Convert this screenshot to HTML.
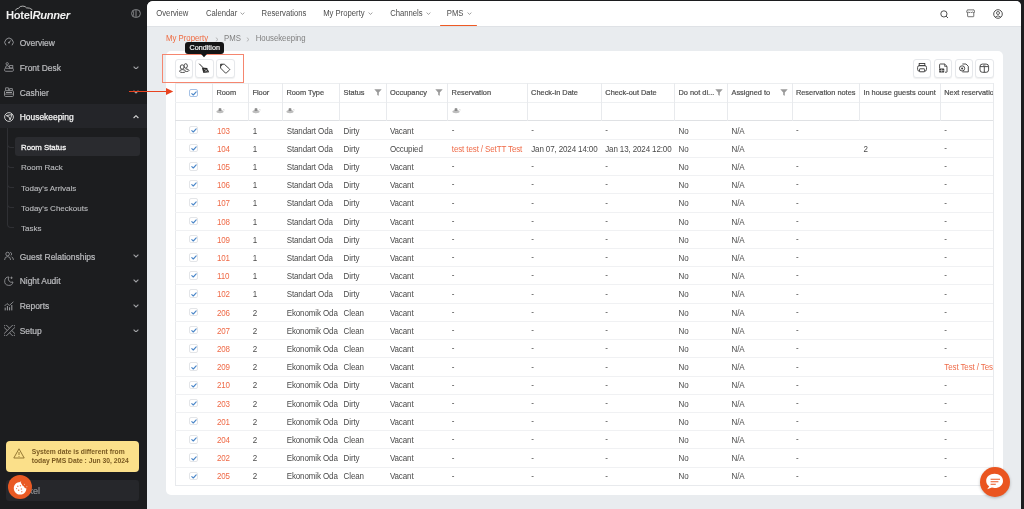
<!DOCTYPE html>
<html><head><meta charset="utf-8">
<style>
*{box-sizing:border-box;margin:0;padding:0}
html,body{width:1024px;height:509px;overflow:hidden;background:#1c1d1f;font-family:"Liberation Sans",sans-serif}
.abs{position:absolute}
.sb-item{position:absolute;left:19.7px;font-size:8.45px;color:#b9babd;line-height:10px;white-space:nowrap;-webkit-text-stroke:0.22px #b9babd}
.sb-ico{position:absolute;left:4px;width:10px;height:10px}
.chev{position:absolute;left:132.6px;width:6px;height:3.8px}
.sub{position:absolute;left:21px;font-size:8px;color:#babbbe;line-height:10px;white-space:nowrap;-webkit-text-stroke:0.12px #babbbe}
#main{position:absolute;left:147px;top:1px;width:874px;height:508px;background:#e9ecef;border-top-left-radius:6px;border-top-right-radius:5px;overflow:hidden}
#nav{position:absolute;left:0;top:0;width:874px;height:26px;background:#fff;border-bottom:1px solid #dfe2e6}
.nv{position:absolute;transform:scaleY(1.15);transform-origin:0 78%;top:7.8px;font-size:7.7px;color:#4d4d4d;line-height:10px;white-space:nowrap}
.bc{position:absolute;transform:scaleY(1.1);transform-origin:0 78%;top:32.8px;font-size:7.8px;color:#808080;line-height:10px;white-space:nowrap}
#card{position:absolute;left:166px;top:50.5px;width:836.5px;height:444px;background:#fff;border-radius:5px}
.tb{position:absolute;width:18.3px;height:18.5px;border:1px solid #e6e8eb;border-radius:3px;background:#fff;box-shadow:0 1px 1px rgba(0,0,0,.06)}
.hd{position:absolute;transform:scaleY(1.04);transform-origin:0 78%;font-size:7.4px;color:#4d4d4d;line-height:9px;white-space:nowrap;-webkit-text-stroke:0.2px #4d4d4d;letter-spacing:0px}
.td{position:absolute;transform:scaleY(1.05);transform-origin:0 78%;font-size:8px;color:#4a4a4a;line-height:10px;white-space:nowrap;letter-spacing:-0.12px}
.org{color:#ef6a47}
.cb{position:absolute;width:9px;height:8.5px;border:1px solid #e3e5e8;border-radius:2px;background:#fff}
.cb svg{position:absolute;left:1px;top:1.2px}
</style></head><body><div id="root" style="position:absolute;left:0;top:0;width:1024px;height:509px;will-change:transform">

<div class="abs" style="left:6px;top:5px;width:64px;height:16px">
<svg width="64" height="16" viewBox="0 0 64 16" style="position:absolute;left:0;top:0">
<path d="M9.3 5.6 Q10.2 3.2 12.6 3.2 Q13.8 1 16.8 1.1 Q19.6 1.2 20.4 2.8 Q23.8 2.6 26.4 4.8" fill="none" stroke="#d8d8d8" stroke-width="0.8"/>
</svg>
<div style="position:absolute;left:0;top:4px;font-size:11.2px;font-weight:bold;color:#f2f2f2;letter-spacing:-0.3px;line-height:12px;white-space:nowrap;transform:scaleY(1.0);transform-origin:0 100%">Hotel<span style="font-style:italic">Runner</span></div>
</div>
<svg class="abs" style="left:131px;top:9px" width="10" height="9" viewBox="0 0 10 9"><rect x="0.6" y="0.6" width="8.8" height="7.8" rx="3.9" fill="none" stroke="#8a8b8e" stroke-width="1"/><line x1="5" y1="0.8" x2="5" y2="8.2" stroke="#8a8b8e" stroke-width="1"/><line x1="2.6" y1="2.2" x2="2.6" y2="6.8" stroke="#8a8b8e" stroke-width="0.8"/></svg>
<svg class="sb-ico" style="top:37.4px" viewBox="0 0 10 10"><path d="M2 8.3 A4.2 4.2 0 1 1 8 8.3" fill="none" stroke="#9d9ea1" stroke-width="0.9"/><circle cx="5" cy="5.6" r="0.9" fill="#9d9ea1"/><line x1="5" y1="5.6" x2="6.8" y2="3.4" stroke="#9d9ea1" stroke-width="0.9"/></svg>
<div class="sb-item" style="top:38.1px">Overview</div>
<svg class="sb-ico" style="top:62.2px" viewBox="0 0 10 10"><circle cx="3.2" cy="1.8" r="1.2" fill="none" stroke="#9d9ea1" stroke-width="0.8"/><path d="M1.5 6 Q1.5 3.6 3.2 3.6 Q4.6 3.6 4.9 5" fill="none" stroke="#9d9ea1" stroke-width="0.8"/><rect x="5.6" y="3.6" width="3.2" height="2.4" fill="none" stroke="#9d9ea1" stroke-width="0.8"/><rect x="0.6" y="6.3" width="8.8" height="3" rx="1" fill="none" stroke="#9d9ea1" stroke-width="0.8"/></svg>
<div class="sb-item" style="top:62.900000000000006px">Front Desk</div>
<svg class="chev" style="top:65.7px" viewBox="0 0 6 3.8"><path d="M0.6 0.7 L3 3 L5.4 0.7" fill="none" stroke="#a0a1a4" stroke-width="1.1"/></svg>
<svg class="sb-ico" style="top:86.9px" viewBox="0 0 10 10"><path d="M1.6 3.4 V0.8 H4.4 V3.4 M5.6 3.4 V1.6 H8.4 V3.4" fill="none" stroke="#9d9ea1" stroke-width="0.8"/><rect x="0.5" y="3.6" width="9" height="5.9" rx="1.2" fill="none" stroke="#9d9ea1" stroke-width="0.85"/><rect x="2" y="4.9" width="6" height="1.1" fill="#9d9ea1"/><line x1="0.5" y1="7.1" x2="9.5" y2="7.1" stroke="#9d9ea1" stroke-width="0.7"/></svg>
<div class="sb-item" style="top:87.60000000000001px">Cashier</div>
<svg class="chev" style="top:90.4px" viewBox="0 0 6 3.8"><path d="M0.6 0.7 L3 3 L5.4 0.7" fill="none" stroke="#a0a1a4" stroke-width="1.1"/></svg>
<div class="abs" style="left:0;top:104px;width:147px;height:24.2px;background:#242529"></div>
<svg class="sb-ico" style="top:111.6px" viewBox="0 0 10 10"><circle cx="5" cy="5" r="4.4" fill="none" stroke="#e0e0e0" stroke-width="0.9"/><path d="M2.3 3.6 L8 2.6 L6 8" fill="none" stroke="#e0e0e0" stroke-width="0.9"/><path d="M2.3 3.6 L5.3 5.2 L6 8" fill="none" stroke="#e0e0e0" stroke-width="0.9"/></svg>
<div class="sb-item" style="top:112.2px;color:#f4f4f4;-webkit-text-stroke:0.25px #f4f4f4">Housekeeping</div>
<svg class="chev" style="top:115px" viewBox="0 0 6 3.8"><path d="M0.6 3 L3 0.7 L5.4 3" fill="none" stroke="#d8d8d8" stroke-width="1.1"/></svg>
<div class="abs" style="left:7px;top:128px;width:0.8px;height:97px;background:#2f3034"></div>
<div class="abs" style="left:7px;top:143.0px;width:6.5px;height:4.5px;border-left:0.8px solid #2f3034;border-bottom:0.8px solid #2f3034;border-bottom-left-radius:4px"></div>
<div class="abs" style="left:7px;top:163.1px;width:6.5px;height:4.5px;border-left:0.8px solid #2f3034;border-bottom:0.8px solid #2f3034;border-bottom-left-radius:4px"></div>
<div class="abs" style="left:7px;top:183.5px;width:6.5px;height:4.5px;border-left:0.8px solid #2f3034;border-bottom:0.8px solid #2f3034;border-bottom-left-radius:4px"></div>
<div class="abs" style="left:7px;top:203.7px;width:6.5px;height:4.5px;border-left:0.8px solid #2f3034;border-bottom:0.8px solid #2f3034;border-bottom-left-radius:4px"></div>
<div class="abs" style="left:7px;top:223.8px;width:6.5px;height:4.5px;border-left:0.8px solid #2f3034;border-bottom:0.8px solid #2f3034;border-bottom-left-radius:4px"></div>
<div class="abs" style="left:14.5px;top:137.1px;width:125.3px;height:19.3px;background:#2a2b2f;border-radius:3px"></div>
<div class="sub" style="top:143.1px;color:#f2f2f2;font-size:7.8px;-webkit-text-stroke:0.3px #f2f2f2">Room Status</div>
<div class="sub" style="top:163.29999999999998px">Room Rack</div>
<div class="sub" style="top:183.7px">Today's Arrivals</div>
<div class="sub" style="top:203.89999999999998px">Today's Checkouts</div>
<div class="sub" style="top:224.0px">Tasks</div>
<svg class="sb-ico" style="top:251.4px" viewBox="0 0 10 10"><circle cx="3.6" cy="3" r="1.8" fill="none" stroke="#9d9ea1" stroke-width="0.8"/><path d="M0.6 9 Q0.6 5.6 3.6 5.6 Q6.6 5.6 6.6 9" fill="none" stroke="#9d9ea1" stroke-width="0.8"/><path d="M6.2 1.3 A1.8 1.8 0 0 1 6.6 4.7" fill="none" stroke="#9d9ea1" stroke-width="0.8"/><path d="M7.6 5.9 Q9.4 6.4 9.4 9" fill="none" stroke="#9d9ea1" stroke-width="0.8"/></svg>
<div class="sb-item" style="top:251.49999999999997px">Guest Relationships</div>
<svg class="chev" style="top:254.39999999999998px" viewBox="0 0 6 3.8"><path d="M0.6 0.7 L3 3 L5.4 0.7" fill="none" stroke="#a0a1a4" stroke-width="1.1"/></svg>
<svg class="sb-ico" style="top:275.9px" viewBox="0 0 10 10"><path d="M5 1 A4.2 4.2 0 1 0 9 6 A3.3 3.3 0 0 1 5 1Z" fill="none" stroke="#9d9ea1" stroke-width="0.8"/><path d="M7.5 0.6 L7.5 3 M6.3 1.8 L8.7 1.8" stroke="#9d9ea1" stroke-width="0.7"/></svg>
<div class="sb-item" style="top:276.0px">Night Audit</div>
<svg class="chev" style="top:278.9px" viewBox="0 0 6 3.8"><path d="M0.6 0.7 L3 3 L5.4 0.7" fill="none" stroke="#a0a1a4" stroke-width="1.1"/></svg>
<svg class="sb-ico" style="top:301px" viewBox="0 0 10 10"><path d="M0.6 5 L3 2.6 L5.4 4.4 L9.4 0.8" fill="none" stroke="#9d9ea1" stroke-width="0.8"/><path d="M1.2 9.4 V6.6 M3.4 9.4 V5 M5.6 9.4 V6.2 M7.8 9.4 V4" stroke="#9d9ea1" stroke-width="1"/></svg>
<div class="sb-item" style="top:301.1px">Reports</div>
<svg class="chev" style="top:304px" viewBox="0 0 6 3.8"><path d="M0.6 0.7 L3 3 L5.4 0.7" fill="none" stroke="#a0a1a4" stroke-width="1.1"/></svg>
<svg class="sb-ico" style="top:325.1px;left:3.6px;width:11px;height:11px" viewBox="0 0 11 11"><rect x="-1.6" y="3.9" width="14.2" height="3.2" rx="1" transform="rotate(45 5.5 5.5)" fill="none" stroke="#9d9ea1" stroke-width="0.8"/><rect x="-1.6" y="3.9" width="14.2" height="3.2" rx="1" transform="rotate(-45 5.5 5.5)" fill="#1c1d20" stroke="#9d9ea1" stroke-width="0.8"/></svg>
<div class="sb-item" style="top:325.70000000000005px">Setup</div>
<svg class="chev" style="top:328.6px" viewBox="0 0 6 3.8"><path d="M0.6 0.7 L3 3 L5.4 0.7" fill="none" stroke="#a0a1a4" stroke-width="1.1"/></svg>
<div class="abs" style="left:6px;top:440.5px;width:133px;height:31px;background:#fbe08a;border-radius:4px"></div>
<svg class="abs" style="left:13px;top:447.5px" width="12" height="11" viewBox="0 0 12 11"><path d="M6 0.8 L11.2 10 L0.8 10 Z" fill="none" stroke="#8a6d2a" stroke-width="0.9" stroke-linejoin="round"/><line x1="6" y1="4" x2="6" y2="7" stroke="#8a6d2a" stroke-width="0.9"/><circle cx="6" cy="8.4" r="0.5" fill="#8a6d2a"/></svg>
<div class="abs" style="left:31.7px;top:447px;font-weight:bold;font-size:6.75px;line-height:9.2px;color:#7a5a22;white-space:nowrap">System date is different from<br>today PMS Date : Jun 30, 2024</div>
<div class="abs" style="left:6px;top:480px;width:133px;height:21.2px;background:#26272b;border-radius:3px"></div>
<div class="abs" style="left:28.4px;top:486.4px;font-size:9px;color:#8f9093;line-height:10px;-webkit-text-stroke:0.2px #8f9093">xel</div>
<div class="abs" style="left:7.9px;top:475.2px;width:24.2px;height:24.2px;border-radius:50%;background:#e95a24"></div>
<svg class="abs" style="left:12.5px;top:480.5px" width="16" height="15" viewBox="0 0 16 15"><path d="M7.2 1 C3.6 1 0.8 3.8 0.8 7.2 C0.8 10.7 3.6 13.6 7.1 13.6 C10.5 13.6 13.3 10.9 13.4 7.4 C12.2 7.4 11.2 6.6 11 5.4 C9.8 5.2 8.8 4.2 8.8 3 C8.2 2.6 7.8 1.8 7.7 1 Z" fill="#fff"/><circle cx="4.8" cy="5.2" r="0.75" fill="#ee7a52"/><circle cx="7.4" cy="4.8" r="0.7" fill="#ee7a52"/><circle cx="5.6" cy="9.2" r="0.75" fill="#ee7a52"/><circle cx="8.4" cy="8" r="0.75" fill="#ee7a52"/><circle cx="8.8" cy="10.8" r="0.7" fill="#ee7a52"/><circle cx="3.6" cy="7.6" r="0.6" fill="#ee7a52"/><circle cx="7.8" cy="0.6" r="0.45" fill="#fff"/><circle cx="11.4" cy="3.2" r="0.45" fill="#fff"/><circle cx="13.9" cy="5.8" r="0.45" fill="#fff"/></svg>

<div id="main">
<div id="nav">
<div class="nv" style="left:9.300000000000011px">Overview</div>
<div class="nv" style="left:59px">Calendar</div>
<svg class="abs" style="left:93.44515625000001px;top:11.2px" width="5" height="3" viewBox="0 0 5 3"><path d="M0.6 0.6 L2.5 2.4 L4.4 0.6" fill="none" stroke="#777" stroke-width="0.7"/></svg>
<div class="nv" style="left:114.60000000000002px">Reservations</div>
<div class="nv" style="left:176.2px">My Property</div>
<svg class="abs" style="left:220.90179687499997px;top:11.2px" width="5" height="3" viewBox="0 0 5 3"><path d="M0.6 0.6 L2.5 2.4 L4.4 0.6" fill="none" stroke="#777" stroke-width="0.7"/></svg>
<div class="nv" style="left:243.2px">Channels</div>
<svg class="abs" style="left:278.931296875px;top:11.2px" width="5" height="3" viewBox="0 0 5 3"><path d="M0.6 0.6 L2.5 2.4 L4.4 0.6" fill="none" stroke="#777" stroke-width="0.7"/></svg>
<div class="nv" style="left:299.8px">PMS</div>
<svg class="abs" style="left:319.686140625px;top:11.2px" width="5" height="3" viewBox="0 0 5 3"><path d="M0.6 0.6 L2.5 2.4 L4.4 0.6" fill="none" stroke="#777" stroke-width="0.7"/></svg>
<div class="abs" style="left:293px;top:23.6px;width:36.6px;height:1.8px;background:#ee5a24;border-radius:1px"></div>
<svg class="abs" style="left:792.5px;top:8.5px" width="9" height="9" viewBox="0 0 9 9"><circle cx="3.9" cy="3.9" r="3.1" fill="none" stroke="#3d3d3d" stroke-width="0.9"/><line x1="6.1" y1="6.1" x2="8" y2="8" stroke="#3d3d3d" stroke-width="0.9"/></svg>
<svg class="abs" style="left:818.9px;top:8.3px" width="9.4" height="8.6" viewBox="0 0 11 10"><path d="M1.6 1 H9.4 L10.2 3.3 Q10.2 4.1 9.3 4.1 Q8.3 4.1 7.9 3.4 Q7.5 4.1 6.5 4.1 Q5.6 4.1 5.2 3.4 Q4.8 4.1 3.9 4.1 Q2.9 4.1 2.5 3.4 Q2.1 4.1 1.3 4.1 Q0.6 4 0.8 3.3 Z" fill="none" stroke="#3d3d3d" stroke-width="0.85" stroke-linejoin="round"/><path d="M1.9 4.2 V8.4 Q1.9 9 2.5 9 H8.5 Q9.1 9 9.1 8.4 V4.2" fill="none" stroke="#3d3d3d" stroke-width="0.85"/></svg>
<svg class="abs" style="left:845.5px;top:7.7px" width="10" height="10" viewBox="0 0 10 10"><circle cx="5" cy="5" r="4.3" fill="none" stroke="#3d3d3d" stroke-width="0.9"/><circle cx="5" cy="4" r="1.5" fill="none" stroke="#3d3d3d" stroke-width="0.8"/><path d="M2.4 8 Q5 5.6 7.6 8" fill="none" stroke="#3d3d3d" stroke-width="0.8"/></svg>

</div>
<div class="bc" style="left:19px;color:#ef6a40">My Property</div>
<div class="bc" style="left:77px">PMS</div>
<div class="bc" style="left:108.69999999999999px">Housekeeping</div>
<svg class="abs" style="left:67.69999999999999px;top:35.6px" width="4" height="5" viewBox="0 0 4 5"><path d="M0.8 0.6 L3 2.5 L0.8 4.4" fill="none" stroke="#a0a0a0" stroke-width="0.7"/></svg>
<svg class="abs" style="left:99.4px;top:35.6px" width="4" height="5" viewBox="0 0 4 5"><path d="M0.8 0.6 L3 2.5 L0.8 4.4" fill="none" stroke="#a0a0a0" stroke-width="0.7"/></svg>
</div>
<div id="card"></div>
<div class="tb" style="left:174.5px;top:59.2px"></div>
<div class="tb" style="left:195.3px;top:59.2px"></div>
<div class="tb" style="left:216.4px;top:59.2px"></div>
<svg class="abs" style="left:174.5px;top:59.2px" width="18" height="18" viewBox="0 0 18 18">
<ellipse cx="10.7" cy="6.9" rx="1.7" ry="2.2" fill="none" stroke="#3a3a3a" stroke-width="0.9"/>
<path d="M10.6 9.8 Q14 10.2 14 11.4 Q14 12.4 11.2 12.6" fill="none" stroke="#3a3a3a" stroke-width="0.9"/>
<ellipse cx="7.15" cy="8" rx="1.9" ry="2.2" fill="#fff" stroke="#3a3a3a" stroke-width="0.9"/>
<path d="M4.6 12.3 Q4.6 10.7 7.4 10.6 Q10.6 10.7 10.6 12.3 Q10.6 13.5 7.6 13.5 Q4.6 13.5 4.6 12.3 Z" fill="#fff" stroke="#3a3a3a" stroke-width="0.9"/>
</svg>
<svg class="abs" style="left:195.3px;top:59.2px" width="18" height="18" viewBox="0 0 18 18">
<path d="M4.2 4.7 L8 8.6" stroke="#2a2a2a" stroke-width="1"/>
<path d="M6.8 8.6 L12.2 9 L14.2 13.2 L8.4 13.9 Z" fill="#2a2a2a"/>
<path d="M9.2 10.2 L12.4 12.4 M12.6 10.4 L9.6 12.8" stroke="#fff" stroke-width="0.5"/>
</svg>
<svg class="abs" style="left:216.4px;top:59.2px" width="18" height="18" viewBox="0 0 18 18">
<path d="M4.6 5.2 L8.3 5.2 L13.6 10.1 Q14 10.5 13.6 10.9 L10.2 14 Q9.8 14.4 9.4 14 L4.6 9.1 Z" fill="none" stroke="#3a3a3a" stroke-width="0.95" stroke-linejoin="round"/>
<path d="M4.6 5.2 L7.2 5.2 L4.6 7.8 Z" fill="#3a3a3a"/>
</svg>

<div class="tb" style="left:913.1px;top:59.3px"></div>
<div class="tb" style="left:933.8px;top:59.3px"></div>
<div class="tb" style="left:954.6px;top:59.3px"></div>
<div class="tb" style="left:975.4px;top:59.3px"></div>
<svg class="abs" style="left:913.1px;top:59.3px" width="18" height="18" viewBox="0 0 18 18">
<rect x="6.2" y="4.5" width="5.6" height="2.2" fill="none" stroke="#3a3a3a" stroke-width="0.9"/>
<rect x="4.6" y="6.6" width="8.9" height="5.6" rx="1.8" fill="none" stroke="#3a3a3a" stroke-width="0.9"/>
<rect x="6.5" y="9.8" width="5.1" height="3" rx="0.4" fill="#fff" stroke="#3a3a3a" stroke-width="0.9"/>
</svg>
<svg class="abs" style="left:933.8px;top:59.3px" width="18" height="18" viewBox="0 0 18 18">
<path d="M5.6 9.6 L5.6 5.6 Q5.6 5 6.2 5 L10.6 5 L13 7.4 L13 12.8 Q13 13.2 12.6 13.2 L11 13.2" fill="none" stroke="#3a3a3a" stroke-width="0.9"/>
<path d="M10.6 5 L10.6 7.4 L13 7.4" fill="none" stroke="#3a3a3a" stroke-width="0.7"/>
<rect x="5.2" y="9.6" width="5" height="4" rx="0.6" fill="#3a3a3a"/>
<path d="M7.7 9.9 V13.3 M5.5 11.6 H9.9" stroke="#fff" stroke-width="0.55"/>
</svg>
<svg class="abs" style="left:954.6px;top:59.3px" width="18" height="18" viewBox="0 0 18 18">
<path d="M7.4 5 L11 5 L13.3 7.3 L13.3 12.9 L7.4 12.9" fill="none" stroke="#3a3a3a" stroke-width="0.9" stroke-linejoin="round"/>
<circle cx="7.1" cy="9.4" r="2.6" fill="#fff" stroke="#3a3a3a" stroke-width="0.9"/>
<circle cx="7.1" cy="9.4" r="1" fill="#3a3a3a"/>
</svg>
<svg class="abs" style="left:975.4px;top:59.3px" width="18" height="18" viewBox="0 0 18 18">
<rect x="5" y="5.1" width="8.6" height="8.2" rx="2.4" fill="none" stroke="#3a3a3a" stroke-width="0.9"/>
<path d="M5 7.6 H13.6 M9.3 7.6 V13.3" stroke="#3a3a3a" stroke-width="0.9"/>
<path d="M8.2 6.6 Q9.3 5.8 10.4 6.6" fill="none" stroke="#3a3a3a" stroke-width="0.6"/>
</svg>

<div class="abs" style="left:175px;top:83.2px;width:818.5px;height:402.6000000000001px;border:1px solid #e8eaed;border-top:1px solid #eceef0"></div>
<div class="abs" style="left:175px;top:101.7px;width:818.5px;height:1px;background:#eef0f2"></div>
<div class="abs" style="left:175px;top:120.1px;width:818.5px;height:1.2px;background:#dfe1e4"></div>
<div class="abs" style="left:212.2px;top:83.2px;width:1px;height:37.39999999999999px;background:#e8eaed"></div>
<div class="abs" style="left:248.2px;top:83.2px;width:1px;height:37.39999999999999px;background:#e8eaed"></div>
<div class="abs" style="left:282.2px;top:83.2px;width:1px;height:37.39999999999999px;background:#e8eaed"></div>
<div class="abs" style="left:339.4px;top:83.2px;width:1px;height:37.39999999999999px;background:#e8eaed"></div>
<div class="abs" style="left:385.8px;top:83.2px;width:1px;height:37.39999999999999px;background:#e8eaed"></div>
<div class="abs" style="left:447.4px;top:83.2px;width:1px;height:37.39999999999999px;background:#e8eaed"></div>
<div class="abs" style="left:526.9px;top:83.2px;width:1px;height:37.39999999999999px;background:#e8eaed"></div>
<div class="abs" style="left:601.1px;top:83.2px;width:1px;height:37.39999999999999px;background:#e8eaed"></div>
<div class="abs" style="left:674.3px;top:83.2px;width:1px;height:37.39999999999999px;background:#e8eaed"></div>
<div class="abs" style="left:727.3px;top:83.2px;width:1px;height:37.39999999999999px;background:#e8eaed"></div>
<div class="abs" style="left:791.7px;top:83.2px;width:1px;height:37.39999999999999px;background:#e8eaed"></div>
<div class="abs" style="left:859.2px;top:83.2px;width:1px;height:37.39999999999999px;background:#e8eaed"></div>
<div class="abs" style="left:940px;top:83.2px;width:1px;height:37.39999999999999px;background:#e8eaed"></div>
<div class="abs" style="left:175px;top:138.81px;width:818.5px;height:1px;background:#f0f1f3"></div>
<div class="abs" style="left:175px;top:157.01999999999998px;width:818.5px;height:1px;background:#f0f1f3"></div>
<div class="abs" style="left:175px;top:175.23px;width:818.5px;height:1px;background:#f0f1f3"></div>
<div class="abs" style="left:175px;top:193.44px;width:818.5px;height:1px;background:#f0f1f3"></div>
<div class="abs" style="left:175px;top:211.65px;width:818.5px;height:1px;background:#f0f1f3"></div>
<div class="abs" style="left:175px;top:229.86px;width:818.5px;height:1px;background:#f0f1f3"></div>
<div class="abs" style="left:175px;top:248.07px;width:818.5px;height:1px;background:#f0f1f3"></div>
<div class="abs" style="left:175px;top:266.28px;width:818.5px;height:1px;background:#f0f1f3"></div>
<div class="abs" style="left:175px;top:284.49px;width:818.5px;height:1px;background:#f0f1f3"></div>
<div class="abs" style="left:175px;top:302.70000000000005px;width:818.5px;height:1px;background:#f0f1f3"></div>
<div class="abs" style="left:175px;top:320.90999999999997px;width:818.5px;height:1px;background:#f0f1f3"></div>
<div class="abs" style="left:175px;top:339.12px;width:818.5px;height:1px;background:#f0f1f3"></div>
<div class="abs" style="left:175px;top:357.33000000000004px;width:818.5px;height:1px;background:#f0f1f3"></div>
<div class="abs" style="left:175px;top:375.53999999999996px;width:818.5px;height:1px;background:#f0f1f3"></div>
<div class="abs" style="left:175px;top:393.75px;width:818.5px;height:1px;background:#f0f1f3"></div>
<div class="abs" style="left:175px;top:411.96000000000004px;width:818.5px;height:1px;background:#f0f1f3"></div>
<div class="abs" style="left:175px;top:430.16999999999996px;width:818.5px;height:1px;background:#f0f1f3"></div>
<div class="abs" style="left:175px;top:448.38px;width:818.5px;height:1px;background:#f0f1f3"></div>
<div class="abs" style="left:175px;top:466.59000000000003px;width:818.5px;height:1px;background:#f0f1f3"></div>
<div class="abs" style="left:189.1px;top:88.9px;width:9.3px;height:8.5px;border:1px solid #a6c2e6;border-radius:2px;background:#fff"><svg style="position:absolute;left:1px;top:1.2px" width="6" height="5" viewBox="0 0 6 5"><path d="M0.8 2.6 L2.3 4 L5.2 0.9" fill="none" stroke="#4a86c8" stroke-width="1.1" stroke-linecap="round" stroke-linejoin="round"/></svg></div>
<div class="hd" style="left:216.39999999999998px;top:87.6px">Room</div>
<svg class="abs" style="left:216.39999999999998px;top:107.2px" width="9" height="6.5" viewBox="0 0 9 6.5"><ellipse cx="4" cy="4.6" rx="3.6" ry="1.7" fill="#bdbdbd"/><path d="M2.5 4 L2.7 1.4 Q4 0.4 5.3 1.4 L5.5 4 Z" fill="#8c8c8c"/><path d="M7.2 2.2 L8.4 3.4 M8.4 2.2 L7.2 3.4" stroke="#d0d0d0" stroke-width="0.6"/></svg>
<div class="hd" style="left:252.39999999999998px;top:87.6px">Floor</div>
<svg class="abs" style="left:252.39999999999998px;top:107.2px" width="9" height="6.5" viewBox="0 0 9 6.5"><ellipse cx="4" cy="4.6" rx="3.6" ry="1.7" fill="#bdbdbd"/><path d="M2.5 4 L2.7 1.4 Q4 0.4 5.3 1.4 L5.5 4 Z" fill="#8c8c8c"/><path d="M7.2 2.2 L8.4 3.4 M8.4 2.2 L7.2 3.4" stroke="#d0d0d0" stroke-width="0.6"/></svg>
<div class="hd" style="left:286.4px;top:87.6px">Room Type</div>
<svg class="abs" style="left:286.4px;top:107.2px" width="9" height="6.5" viewBox="0 0 9 6.5"><ellipse cx="4" cy="4.6" rx="3.6" ry="1.7" fill="#bdbdbd"/><path d="M2.5 4 L2.7 1.4 Q4 0.4 5.3 1.4 L5.5 4 Z" fill="#8c8c8c"/><path d="M7.2 2.2 L8.4 3.4 M8.4 2.2 L7.2 3.4" stroke="#d0d0d0" stroke-width="0.6"/></svg>
<div class="hd" style="left:343.59999999999997px;top:87.6px">Status</div>
<svg class="abs" style="left:373.8px;top:88.8px" width="8" height="7" viewBox="0 0 8 7"><path d="M0.3 0.3 H7.7 L4.8 3.4 V6.8 L3.2 6 V3.4 Z" fill="#9a9a9a"/></svg>
<div class="hd" style="left:390.0px;top:87.6px">Occupancy</div>
<svg class="abs" style="left:435.4px;top:88.8px" width="8" height="7" viewBox="0 0 8 7"><path d="M0.3 0.3 H7.7 L4.8 3.4 V6.8 L3.2 6 V3.4 Z" fill="#9a9a9a"/></svg>
<div class="hd" style="left:451.59999999999997px;top:87.6px">Reservation</div>
<svg class="abs" style="left:451.59999999999997px;top:107.2px" width="9" height="6.5" viewBox="0 0 9 6.5"><ellipse cx="4" cy="4.6" rx="3.6" ry="1.7" fill="#bdbdbd"/><path d="M2.5 4 L2.7 1.4 Q4 0.4 5.3 1.4 L5.5 4 Z" fill="#8c8c8c"/><path d="M7.2 2.2 L8.4 3.4 M8.4 2.2 L7.2 3.4" stroke="#d0d0d0" stroke-width="0.6"/></svg>
<div class="hd" style="left:531.1px;top:87.6px">Check-in Date</div>
<div class="hd" style="left:605.3000000000001px;top:87.6px">Check-out Date</div>
<div class="hd" style="left:678.5px;top:87.6px">Do not di...</div>
<svg class="abs" style="left:715.3px;top:88.8px" width="8" height="7" viewBox="0 0 8 7"><path d="M0.3 0.3 H7.7 L4.8 3.4 V6.8 L3.2 6 V3.4 Z" fill="#9a9a9a"/></svg>
<div class="hd" style="left:731.5px;top:87.6px">Assigned to</div>
<svg class="abs" style="left:779.7px;top:88.8px" width="8" height="7" viewBox="0 0 8 7"><path d="M0.3 0.3 H7.7 L4.8 3.4 V6.8 L3.2 6 V3.4 Z" fill="#9a9a9a"/></svg>
<div class="hd" style="left:795.9000000000001px;top:87.6px">Reservation notes</div>
<div class="hd" style="left:863.4000000000001px;top:87.6px">In house guests count</div>
<div class="hd" style="left:944.2px;top:87.6px">Next reservatio</div>
<div class="cb" style="left:189.4px;top:125.60499999999999px"><svg width="6" height="5" viewBox="0 0 6 5"><path d="M0.8 2.6 L2.3 4 L5.2 0.9" fill="none" stroke="#4a86c8" stroke-width="1.1" stroke-linecap="round" stroke-linejoin="round"/></svg></div>
<div class="td org" style="left:216.9px;top:126.5px">103</div>
<div class="td" style="left:252.8px;top:126.5px">1</div>
<div class="td" style="left:286.7px;top:126.5px">Standart Oda</div>
<div class="td" style="left:343.6px;top:126.5px">Dirty</div>
<div class="td" style="left:389.9px;top:126.5px">Vacant</div>
<div class="td" style="left:451.8px;top:125.8px">-</div>
<div class="td" style="left:531.2px;top:125.8px">-</div>
<div class="td" style="left:605.2px;top:125.8px">-</div>
<div class="td" style="left:678.5px;top:126.5px">No</div>
<div class="td" style="left:731.6px;top:126.5px">N/A</div>
<div class="td" style="left:796px;top:125.8px">-</div>
<div class="td" style="left:944.3px;top:125.8px">-</div>
<div class="cb" style="left:189.4px;top:143.815px"><svg width="6" height="5" viewBox="0 0 6 5"><path d="M0.8 2.6 L2.3 4 L5.2 0.9" fill="none" stroke="#4a86c8" stroke-width="1.1" stroke-linecap="round" stroke-linejoin="round"/></svg></div>
<div class="td org" style="left:216.9px;top:144.71px">104</div>
<div class="td" style="left:252.8px;top:144.71px">1</div>
<div class="td" style="left:286.7px;top:144.71px">Standart Oda</div>
<div class="td" style="left:343.6px;top:144.71px">Dirty</div>
<div class="td" style="left:389.9px;top:144.71px">Occupied</div>
<div class="td org" style="left:451.8px;top:144.71px">test test / SetTT Test</div>
<div class="td" style="left:531.2px;top:144.71px">Jan 07, 2024 14:00</div>
<div class="td" style="left:605.2px;top:144.71px">Jan 13, 2024 12:00</div>
<div class="td" style="left:678.5px;top:144.71px">No</div>
<div class="td" style="left:731.6px;top:144.71px">N/A</div>
<div class="td" style="left:863.4px;top:144.71px">2</div>
<div class="td" style="left:944.3px;top:144.01000000000002px">-</div>
<div class="cb" style="left:189.4px;top:162.02499999999998px"><svg width="6" height="5" viewBox="0 0 6 5"><path d="M0.8 2.6 L2.3 4 L5.2 0.9" fill="none" stroke="#4a86c8" stroke-width="1.1" stroke-linecap="round" stroke-linejoin="round"/></svg></div>
<div class="td org" style="left:216.9px;top:162.92px">105</div>
<div class="td" style="left:252.8px;top:162.92px">1</div>
<div class="td" style="left:286.7px;top:162.92px">Standart Oda</div>
<div class="td" style="left:343.6px;top:162.92px">Dirty</div>
<div class="td" style="left:389.9px;top:162.92px">Vacant</div>
<div class="td" style="left:451.8px;top:162.22px">-</div>
<div class="td" style="left:531.2px;top:162.22px">-</div>
<div class="td" style="left:605.2px;top:162.22px">-</div>
<div class="td" style="left:678.5px;top:162.92px">No</div>
<div class="td" style="left:731.6px;top:162.92px">N/A</div>
<div class="td" style="left:796px;top:162.22px">-</div>
<div class="td" style="left:944.3px;top:162.22px">-</div>
<div class="cb" style="left:189.4px;top:180.23499999999999px"><svg width="6" height="5" viewBox="0 0 6 5"><path d="M0.8 2.6 L2.3 4 L5.2 0.9" fill="none" stroke="#4a86c8" stroke-width="1.1" stroke-linecap="round" stroke-linejoin="round"/></svg></div>
<div class="td org" style="left:216.9px;top:181.13px">106</div>
<div class="td" style="left:252.8px;top:181.13px">1</div>
<div class="td" style="left:286.7px;top:181.13px">Standart Oda</div>
<div class="td" style="left:343.6px;top:181.13px">Dirty</div>
<div class="td" style="left:389.9px;top:181.13px">Vacant</div>
<div class="td" style="left:451.8px;top:180.43px">-</div>
<div class="td" style="left:531.2px;top:180.43px">-</div>
<div class="td" style="left:605.2px;top:180.43px">-</div>
<div class="td" style="left:678.5px;top:181.13px">No</div>
<div class="td" style="left:731.6px;top:181.13px">N/A</div>
<div class="td" style="left:796px;top:180.43px">-</div>
<div class="td" style="left:944.3px;top:180.43px">-</div>
<div class="cb" style="left:189.4px;top:198.445px"><svg width="6" height="5" viewBox="0 0 6 5"><path d="M0.8 2.6 L2.3 4 L5.2 0.9" fill="none" stroke="#4a86c8" stroke-width="1.1" stroke-linecap="round" stroke-linejoin="round"/></svg></div>
<div class="td org" style="left:216.9px;top:199.34px">107</div>
<div class="td" style="left:252.8px;top:199.34px">1</div>
<div class="td" style="left:286.7px;top:199.34px">Standart Oda</div>
<div class="td" style="left:343.6px;top:199.34px">Dirty</div>
<div class="td" style="left:389.9px;top:199.34px">Vacant</div>
<div class="td" style="left:451.8px;top:198.64000000000001px">-</div>
<div class="td" style="left:531.2px;top:198.64000000000001px">-</div>
<div class="td" style="left:605.2px;top:198.64000000000001px">-</div>
<div class="td" style="left:678.5px;top:199.34px">No</div>
<div class="td" style="left:731.6px;top:199.34px">N/A</div>
<div class="td" style="left:796px;top:198.64000000000001px">-</div>
<div class="td" style="left:944.3px;top:198.64000000000001px">-</div>
<div class="cb" style="left:189.4px;top:216.655px"><svg width="6" height="5" viewBox="0 0 6 5"><path d="M0.8 2.6 L2.3 4 L5.2 0.9" fill="none" stroke="#4a86c8" stroke-width="1.1" stroke-linecap="round" stroke-linejoin="round"/></svg></div>
<div class="td org" style="left:216.9px;top:217.55px">108</div>
<div class="td" style="left:252.8px;top:217.55px">1</div>
<div class="td" style="left:286.7px;top:217.55px">Standart Oda</div>
<div class="td" style="left:343.6px;top:217.55px">Dirty</div>
<div class="td" style="left:389.9px;top:217.55px">Vacant</div>
<div class="td" style="left:451.8px;top:216.85000000000002px">-</div>
<div class="td" style="left:531.2px;top:216.85000000000002px">-</div>
<div class="td" style="left:605.2px;top:216.85000000000002px">-</div>
<div class="td" style="left:678.5px;top:217.55px">No</div>
<div class="td" style="left:731.6px;top:217.55px">N/A</div>
<div class="td" style="left:796px;top:216.85000000000002px">-</div>
<div class="td" style="left:944.3px;top:216.85000000000002px">-</div>
<div class="cb" style="left:189.4px;top:234.865px"><svg width="6" height="5" viewBox="0 0 6 5"><path d="M0.8 2.6 L2.3 4 L5.2 0.9" fill="none" stroke="#4a86c8" stroke-width="1.1" stroke-linecap="round" stroke-linejoin="round"/></svg></div>
<div class="td org" style="left:216.9px;top:235.76000000000002px">109</div>
<div class="td" style="left:252.8px;top:235.76000000000002px">1</div>
<div class="td" style="left:286.7px;top:235.76000000000002px">Standart Oda</div>
<div class="td" style="left:343.6px;top:235.76000000000002px">Dirty</div>
<div class="td" style="left:389.9px;top:235.76000000000002px">Vacant</div>
<div class="td" style="left:451.8px;top:235.06000000000003px">-</div>
<div class="td" style="left:531.2px;top:235.06000000000003px">-</div>
<div class="td" style="left:605.2px;top:235.06000000000003px">-</div>
<div class="td" style="left:678.5px;top:235.76000000000002px">No</div>
<div class="td" style="left:731.6px;top:235.76000000000002px">N/A</div>
<div class="td" style="left:796px;top:235.06000000000003px">-</div>
<div class="td" style="left:944.3px;top:235.06000000000003px">-</div>
<div class="cb" style="left:189.4px;top:253.07500000000002px"><svg width="6" height="5" viewBox="0 0 6 5"><path d="M0.8 2.6 L2.3 4 L5.2 0.9" fill="none" stroke="#4a86c8" stroke-width="1.1" stroke-linecap="round" stroke-linejoin="round"/></svg></div>
<div class="td org" style="left:216.9px;top:253.97px">101</div>
<div class="td" style="left:252.8px;top:253.97px">1</div>
<div class="td" style="left:286.7px;top:253.97px">Standart Oda</div>
<div class="td" style="left:343.6px;top:253.97px">Dirty</div>
<div class="td" style="left:389.9px;top:253.97px">Vacant</div>
<div class="td" style="left:451.8px;top:253.27px">-</div>
<div class="td" style="left:531.2px;top:253.27px">-</div>
<div class="td" style="left:605.2px;top:253.27px">-</div>
<div class="td" style="left:678.5px;top:253.97px">No</div>
<div class="td" style="left:731.6px;top:253.97px">N/A</div>
<div class="td" style="left:796px;top:253.27px">-</div>
<div class="td" style="left:944.3px;top:253.27px">-</div>
<div class="cb" style="left:189.4px;top:271.28499999999997px"><svg width="6" height="5" viewBox="0 0 6 5"><path d="M0.8 2.6 L2.3 4 L5.2 0.9" fill="none" stroke="#4a86c8" stroke-width="1.1" stroke-linecap="round" stroke-linejoin="round"/></svg></div>
<div class="td org" style="left:216.9px;top:272.17999999999995px">110</div>
<div class="td" style="left:252.8px;top:272.17999999999995px">1</div>
<div class="td" style="left:286.7px;top:272.17999999999995px">Standart Oda</div>
<div class="td" style="left:343.6px;top:272.17999999999995px">Dirty</div>
<div class="td" style="left:389.9px;top:272.17999999999995px">Vacant</div>
<div class="td" style="left:451.8px;top:271.47999999999996px">-</div>
<div class="td" style="left:531.2px;top:271.47999999999996px">-</div>
<div class="td" style="left:605.2px;top:271.47999999999996px">-</div>
<div class="td" style="left:678.5px;top:272.17999999999995px">No</div>
<div class="td" style="left:731.6px;top:272.17999999999995px">N/A</div>
<div class="td" style="left:796px;top:271.47999999999996px">-</div>
<div class="td" style="left:944.3px;top:271.47999999999996px">-</div>
<div class="cb" style="left:189.4px;top:289.495px"><svg width="6" height="5" viewBox="0 0 6 5"><path d="M0.8 2.6 L2.3 4 L5.2 0.9" fill="none" stroke="#4a86c8" stroke-width="1.1" stroke-linecap="round" stroke-linejoin="round"/></svg></div>
<div class="td org" style="left:216.9px;top:290.39px">102</div>
<div class="td" style="left:252.8px;top:290.39px">1</div>
<div class="td" style="left:286.7px;top:290.39px">Standart Oda</div>
<div class="td" style="left:343.6px;top:290.39px">Dirty</div>
<div class="td" style="left:389.9px;top:290.39px">Vacant</div>
<div class="td" style="left:451.8px;top:289.69px">-</div>
<div class="td" style="left:531.2px;top:289.69px">-</div>
<div class="td" style="left:605.2px;top:289.69px">-</div>
<div class="td" style="left:678.5px;top:290.39px">No</div>
<div class="td" style="left:731.6px;top:290.39px">N/A</div>
<div class="td" style="left:796px;top:289.69px">-</div>
<div class="td" style="left:944.3px;top:289.69px">-</div>
<div class="cb" style="left:189.4px;top:307.70500000000004px"><svg width="6" height="5" viewBox="0 0 6 5"><path d="M0.8 2.6 L2.3 4 L5.2 0.9" fill="none" stroke="#4a86c8" stroke-width="1.1" stroke-linecap="round" stroke-linejoin="round"/></svg></div>
<div class="td org" style="left:216.9px;top:308.6px">206</div>
<div class="td" style="left:252.8px;top:308.6px">2</div>
<div class="td" style="left:286.7px;top:308.6px">Ekonomik Oda</div>
<div class="td" style="left:343.6px;top:308.6px">Clean</div>
<div class="td" style="left:389.9px;top:308.6px">Vacant</div>
<div class="td" style="left:451.8px;top:307.90000000000003px">-</div>
<div class="td" style="left:531.2px;top:307.90000000000003px">-</div>
<div class="td" style="left:605.2px;top:307.90000000000003px">-</div>
<div class="td" style="left:678.5px;top:308.6px">No</div>
<div class="td" style="left:731.6px;top:308.6px">N/A</div>
<div class="td" style="left:796px;top:307.90000000000003px">-</div>
<div class="td" style="left:944.3px;top:307.90000000000003px">-</div>
<div class="cb" style="left:189.4px;top:325.91499999999996px"><svg width="6" height="5" viewBox="0 0 6 5"><path d="M0.8 2.6 L2.3 4 L5.2 0.9" fill="none" stroke="#4a86c8" stroke-width="1.1" stroke-linecap="round" stroke-linejoin="round"/></svg></div>
<div class="td org" style="left:216.9px;top:326.80999999999995px">207</div>
<div class="td" style="left:252.8px;top:326.80999999999995px">2</div>
<div class="td" style="left:286.7px;top:326.80999999999995px">Ekonomik Oda</div>
<div class="td" style="left:343.6px;top:326.80999999999995px">Clean</div>
<div class="td" style="left:389.9px;top:326.80999999999995px">Vacant</div>
<div class="td" style="left:451.8px;top:326.10999999999996px">-</div>
<div class="td" style="left:531.2px;top:326.10999999999996px">-</div>
<div class="td" style="left:605.2px;top:326.10999999999996px">-</div>
<div class="td" style="left:678.5px;top:326.80999999999995px">No</div>
<div class="td" style="left:731.6px;top:326.80999999999995px">N/A</div>
<div class="td" style="left:796px;top:326.10999999999996px">-</div>
<div class="td" style="left:944.3px;top:326.10999999999996px">-</div>
<div class="cb" style="left:189.4px;top:344.125px"><svg width="6" height="5" viewBox="0 0 6 5"><path d="M0.8 2.6 L2.3 4 L5.2 0.9" fill="none" stroke="#4a86c8" stroke-width="1.1" stroke-linecap="round" stroke-linejoin="round"/></svg></div>
<div class="td org" style="left:216.9px;top:345.02px">208</div>
<div class="td" style="left:252.8px;top:345.02px">2</div>
<div class="td" style="left:286.7px;top:345.02px">Ekonomik Oda</div>
<div class="td" style="left:343.6px;top:345.02px">Clean</div>
<div class="td" style="left:389.9px;top:345.02px">Vacant</div>
<div class="td" style="left:451.8px;top:344.32px">-</div>
<div class="td" style="left:531.2px;top:344.32px">-</div>
<div class="td" style="left:605.2px;top:344.32px">-</div>
<div class="td" style="left:678.5px;top:345.02px">No</div>
<div class="td" style="left:731.6px;top:345.02px">N/A</div>
<div class="td" style="left:796px;top:344.32px">-</div>
<div class="td" style="left:944.3px;top:344.32px">-</div>
<div class="cb" style="left:189.4px;top:362.33500000000004px"><svg width="6" height="5" viewBox="0 0 6 5"><path d="M0.8 2.6 L2.3 4 L5.2 0.9" fill="none" stroke="#4a86c8" stroke-width="1.1" stroke-linecap="round" stroke-linejoin="round"/></svg></div>
<div class="td org" style="left:216.9px;top:363.23px">209</div>
<div class="td" style="left:252.8px;top:363.23px">2</div>
<div class="td" style="left:286.7px;top:363.23px">Ekonomik Oda</div>
<div class="td" style="left:343.6px;top:363.23px">Clean</div>
<div class="td" style="left:389.9px;top:363.23px">Vacant</div>
<div class="td" style="left:451.8px;top:362.53000000000003px">-</div>
<div class="td" style="left:531.2px;top:362.53000000000003px">-</div>
<div class="td" style="left:605.2px;top:362.53000000000003px">-</div>
<div class="td" style="left:678.5px;top:363.23px">No</div>
<div class="td" style="left:731.6px;top:363.23px">N/A</div>
<div class="td" style="left:796px;top:362.53000000000003px">-</div>
<div class="td org" style="left:944.3px;top:363.23px">Test Test / Tes</div>
<div class="cb" style="left:189.4px;top:380.54499999999996px"><svg width="6" height="5" viewBox="0 0 6 5"><path d="M0.8 2.6 L2.3 4 L5.2 0.9" fill="none" stroke="#4a86c8" stroke-width="1.1" stroke-linecap="round" stroke-linejoin="round"/></svg></div>
<div class="td org" style="left:216.9px;top:381.43999999999994px">210</div>
<div class="td" style="left:252.8px;top:381.43999999999994px">2</div>
<div class="td" style="left:286.7px;top:381.43999999999994px">Ekonomik Oda</div>
<div class="td" style="left:343.6px;top:381.43999999999994px">Dirty</div>
<div class="td" style="left:389.9px;top:381.43999999999994px">Vacant</div>
<div class="td" style="left:451.8px;top:380.73999999999995px">-</div>
<div class="td" style="left:531.2px;top:380.73999999999995px">-</div>
<div class="td" style="left:605.2px;top:380.73999999999995px">-</div>
<div class="td" style="left:678.5px;top:381.43999999999994px">No</div>
<div class="td" style="left:731.6px;top:381.43999999999994px">N/A</div>
<div class="td" style="left:796px;top:380.73999999999995px">-</div>
<div class="td" style="left:944.3px;top:380.73999999999995px">-</div>
<div class="cb" style="left:189.4px;top:398.755px"><svg width="6" height="5" viewBox="0 0 6 5"><path d="M0.8 2.6 L2.3 4 L5.2 0.9" fill="none" stroke="#4a86c8" stroke-width="1.1" stroke-linecap="round" stroke-linejoin="round"/></svg></div>
<div class="td org" style="left:216.9px;top:399.65px">203</div>
<div class="td" style="left:252.8px;top:399.65px">2</div>
<div class="td" style="left:286.7px;top:399.65px">Ekonomik Oda</div>
<div class="td" style="left:343.6px;top:399.65px">Dirty</div>
<div class="td" style="left:389.9px;top:399.65px">Vacant</div>
<div class="td" style="left:451.8px;top:398.95px">-</div>
<div class="td" style="left:531.2px;top:398.95px">-</div>
<div class="td" style="left:605.2px;top:398.95px">-</div>
<div class="td" style="left:678.5px;top:399.65px">No</div>
<div class="td" style="left:731.6px;top:399.65px">N/A</div>
<div class="td" style="left:796px;top:398.95px">-</div>
<div class="td" style="left:944.3px;top:398.95px">-</div>
<div class="cb" style="left:189.4px;top:416.96500000000003px"><svg width="6" height="5" viewBox="0 0 6 5"><path d="M0.8 2.6 L2.3 4 L5.2 0.9" fill="none" stroke="#4a86c8" stroke-width="1.1" stroke-linecap="round" stroke-linejoin="round"/></svg></div>
<div class="td org" style="left:216.9px;top:417.86px">201</div>
<div class="td" style="left:252.8px;top:417.86px">2</div>
<div class="td" style="left:286.7px;top:417.86px">Ekonomik Oda</div>
<div class="td" style="left:343.6px;top:417.86px">Dirty</div>
<div class="td" style="left:389.9px;top:417.86px">Vacant</div>
<div class="td" style="left:451.8px;top:417.16px">-</div>
<div class="td" style="left:531.2px;top:417.16px">-</div>
<div class="td" style="left:605.2px;top:417.16px">-</div>
<div class="td" style="left:678.5px;top:417.86px">No</div>
<div class="td" style="left:731.6px;top:417.86px">N/A</div>
<div class="td" style="left:796px;top:417.16px">-</div>
<div class="td" style="left:944.3px;top:417.16px">-</div>
<div class="cb" style="left:189.4px;top:435.17499999999995px"><svg width="6" height="5" viewBox="0 0 6 5"><path d="M0.8 2.6 L2.3 4 L5.2 0.9" fill="none" stroke="#4a86c8" stroke-width="1.1" stroke-linecap="round" stroke-linejoin="round"/></svg></div>
<div class="td org" style="left:216.9px;top:436.06999999999994px">204</div>
<div class="td" style="left:252.8px;top:436.06999999999994px">2</div>
<div class="td" style="left:286.7px;top:436.06999999999994px">Ekonomik Oda</div>
<div class="td" style="left:343.6px;top:436.06999999999994px">Clean</div>
<div class="td" style="left:389.9px;top:436.06999999999994px">Vacant</div>
<div class="td" style="left:451.8px;top:435.36999999999995px">-</div>
<div class="td" style="left:531.2px;top:435.36999999999995px">-</div>
<div class="td" style="left:605.2px;top:435.36999999999995px">-</div>
<div class="td" style="left:678.5px;top:436.06999999999994px">No</div>
<div class="td" style="left:731.6px;top:436.06999999999994px">N/A</div>
<div class="td" style="left:796px;top:435.36999999999995px">-</div>
<div class="td" style="left:944.3px;top:435.36999999999995px">-</div>
<div class="cb" style="left:189.4px;top:453.385px"><svg width="6" height="5" viewBox="0 0 6 5"><path d="M0.8 2.6 L2.3 4 L5.2 0.9" fill="none" stroke="#4a86c8" stroke-width="1.1" stroke-linecap="round" stroke-linejoin="round"/></svg></div>
<div class="td org" style="left:216.9px;top:454.28px">202</div>
<div class="td" style="left:252.8px;top:454.28px">2</div>
<div class="td" style="left:286.7px;top:454.28px">Ekonomik Oda</div>
<div class="td" style="left:343.6px;top:454.28px">Dirty</div>
<div class="td" style="left:389.9px;top:454.28px">Vacant</div>
<div class="td" style="left:451.8px;top:453.58px">-</div>
<div class="td" style="left:531.2px;top:453.58px">-</div>
<div class="td" style="left:605.2px;top:453.58px">-</div>
<div class="td" style="left:678.5px;top:454.28px">No</div>
<div class="td" style="left:731.6px;top:454.28px">N/A</div>
<div class="td" style="left:796px;top:453.58px">-</div>
<div class="td" style="left:944.3px;top:453.58px">-</div>
<div class="cb" style="left:189.4px;top:471.595px"><svg width="6" height="5" viewBox="0 0 6 5"><path d="M0.8 2.6 L2.3 4 L5.2 0.9" fill="none" stroke="#4a86c8" stroke-width="1.1" stroke-linecap="round" stroke-linejoin="round"/></svg></div>
<div class="td org" style="left:216.9px;top:472.49px">205</div>
<div class="td" style="left:252.8px;top:472.49px">2</div>
<div class="td" style="left:286.7px;top:472.49px">Ekonomik Oda</div>
<div class="td" style="left:343.6px;top:472.49px">Clean</div>
<div class="td" style="left:389.9px;top:472.49px">Vacant</div>
<div class="td" style="left:451.8px;top:471.79px">-</div>
<div class="td" style="left:531.2px;top:471.79px">-</div>
<div class="td" style="left:605.2px;top:471.79px">-</div>
<div class="td" style="left:678.5px;top:472.49px">No</div>
<div class="td" style="left:731.6px;top:472.49px">N/A</div>
<div class="td" style="left:796px;top:471.79px">-</div>
<div class="td" style="left:944.3px;top:471.79px">-</div>
<div class="abs" style="left:993.5px;top:84.2px;width:8px;height:400.6000000000001px;background:#fff"></div>
<div class="abs" style="left:993.0px;top:83.2px;width:1px;height:402.6000000000001px;background:#e8eaed"></div>
<div class="abs" style="left:162px;top:53.7px;width:81.5px;height:29px;border:1px solid #f5866f;"></div>
<div class="abs" style="left:129px;top:90.7px;width:38px;height:1.3px;background:#e8431f"></div>
<svg class="abs" style="left:166px;top:87.8px" width="8" height="7" viewBox="0 0 8 7"><path d="M0 0 L7.2 3.5 L0 7 Z" fill="#e8431f"/></svg>
<div class="abs" style="left:185.4px;top:41.9px;width:38.8px;height:12.6px;background:#141516;border-radius:3px"></div>
<svg class="abs" style="left:201.4px;top:54.4px" width="6" height="4" viewBox="0 0 6 4"><path d="M0 0 H6 L3 3.2 Z" fill="#141516"/></svg>
<div class="abs" style="left:189.6px;top:43px;font-size:7.2px;color:#f4f4f4;line-height:9px;-webkit-text-stroke:0.2px #f4f4f4">Condition</div>
<div class="abs" style="left:979.7px;top:466.7px;width:30px;height:30px;border-radius:50%;background:#ea5520;box-shadow:0 1px 3px rgba(0,0,0,.25)"></div>
<svg class="abs" style="left:979.7px;top:466.7px" width="30" height="30" viewBox="0 0 30 30"><path d="M14.6 6.8 C19.4 6.8 23 9.8 23 13.9 C23 18 19.4 21 14.6 21 C13.6 21 12.7 20.9 11.9 20.6 L7.2 22.2 L9.2 19.2 C7.2 17.9 6.2 16 6.2 13.9 C6.2 9.8 9.8 6.8 14.6 6.8 Z" fill="#fff"/><path d="M10.6 12.3 H20 M10.6 14.8 H18.4 M10.6 17.3 H15.8" stroke="#ea5520" stroke-width="1.1"/></svg>
</div></body></html>
